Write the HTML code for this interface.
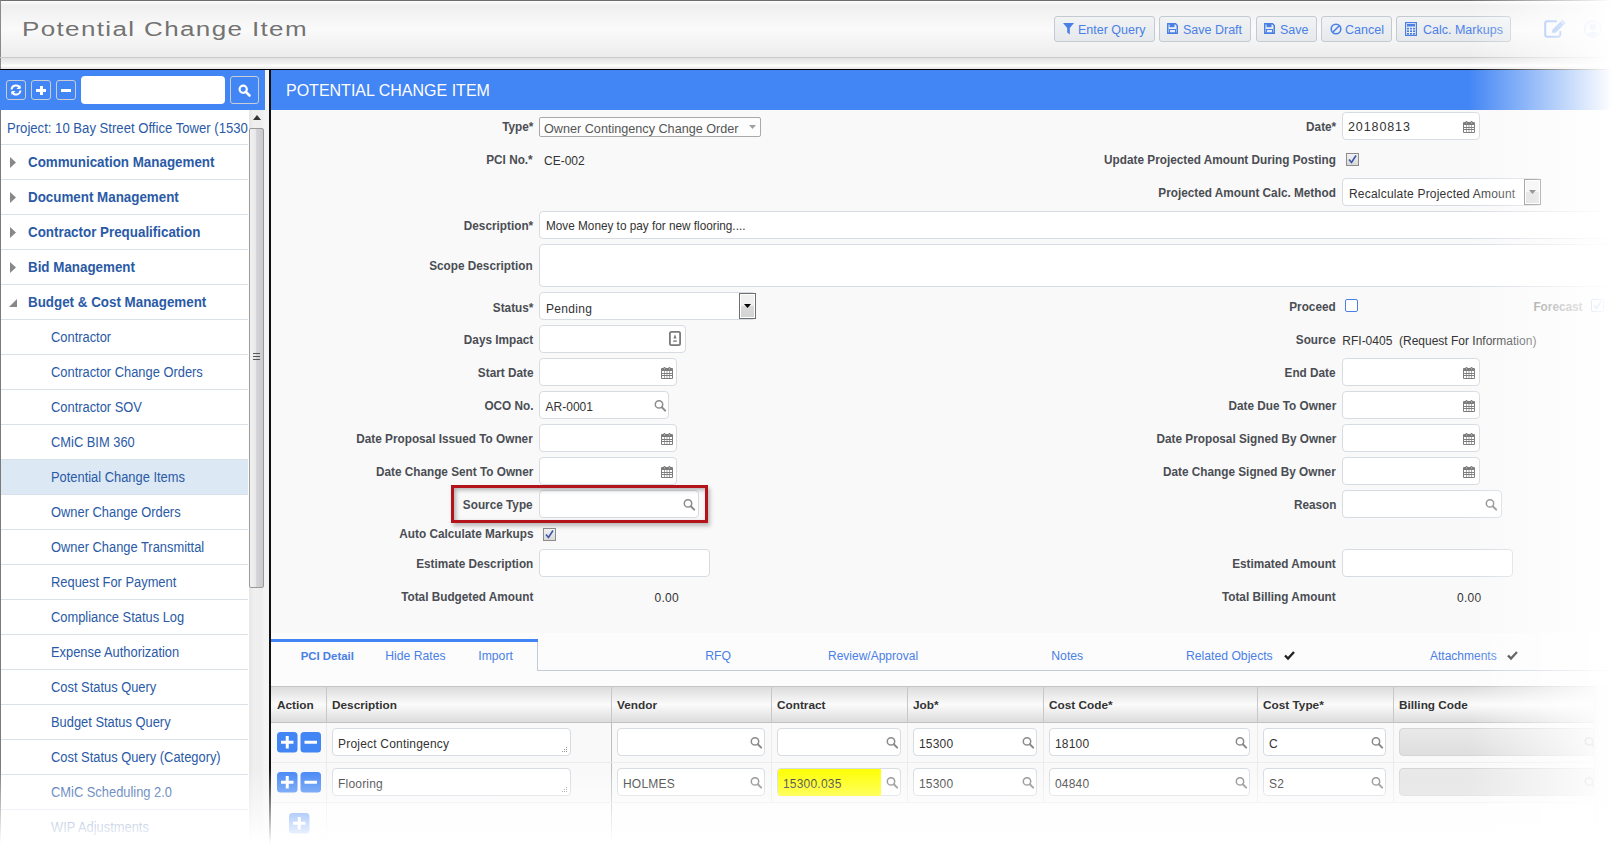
<!DOCTYPE html><html><head><meta charset="utf-8"><style>
*{margin:0;padding:0;box-sizing:border-box}
html,body{width:1612px;height:845px;overflow:hidden;background:#fff;font-family:"Liberation Sans", sans-serif}
.t{position:absolute;white-space:nowrap;line-height:1;font-family:"Liberation Sans", sans-serif}
.b{position:absolute}
.inp{position:absolute;background:#fff;border:1px solid #d6dce2;border-radius:4px}
svg{position:absolute;overflow:visible}
</style></head><body><div class="b" style="left:0px;top:0px;width:1612px;height:57px;background:linear-gradient(#fdfdfd,#efefef 8%,#fafafa 50%,#ececec);border-top:1px solid #6e6e6e;border-left:1px solid #8a8a8a"></div><div class="b" style="left:0px;top:57px;width:1612px;height:1px;background:#c9c9c9"></div><div class="b" style="left:0px;top:58px;width:1612px;height:11px;background:linear-gradient(#e2e2e2,#f4f4f4 55%,#fff 65%,#fff 75%,#ececec 85%,#ececec);border-left:1px solid #8a8a8a"></div><div class="b" style="left:0px;top:69px;width:1612px;height:1px;background:#000"></div><span class="t" style="left:22px;top:19px;font-size:20px;color:#737373;transform:scaleX(1.3);transform-origin:0 0;letter-spacing:1.05px">Potential Change Item</span><div class="b" style="left:1054px;top:16px;width:101px;height:26px;background:linear-gradient(#f1f3f5,#e6e9ec);border:1px solid #c3cad2;border-radius:3px"></div><svg style="left:1063px;top:23px" width="11" height="12" viewBox="0 0 11 12"><path d="M0 0H11L6.8 5V11.5L4.2 9.5V5Z" fill="#4a80e6"/></svg><span class="t" style="left:1078px;top:23.92px;font-size:12.5px;font-weight:normal;color:#4a80e6;">Enter Query</span><div class="b" style="left:1159px;top:16px;width:92px;height:26px;background:linear-gradient(#f1f3f5,#e6e9ec);border:1px solid #c3cad2;border-radius:3px"></div><svg style="left:1167px;top:23px" width="11" height="11" viewBox="0 0 11 11"><path d="M0.75 0.75H8.5L10.25 2.5V10.25H0.75Z" fill="none" stroke="#4a80e6" stroke-width="1.5"/><rect x="2.5" y="1" width="5" height="3.2" fill="#4a80e6"/><rect x="2.5" y="6.5" width="6" height="3.5" fill="none" stroke="#4a80e6" stroke-width="1"/></svg><span class="t" style="left:1183px;top:23.92px;font-size:12.5px;font-weight:normal;color:#4a80e6;">Save Draft</span><div class="b" style="left:1256px;top:16px;width:61px;height:26px;background:linear-gradient(#f1f3f5,#e6e9ec);border:1px solid #c3cad2;border-radius:3px"></div><svg style="left:1264px;top:23px" width="11" height="11" viewBox="0 0 11 11"><path d="M0.75 0.75H8.5L10.25 2.5V10.25H0.75Z" fill="none" stroke="#4a80e6" stroke-width="1.5"/><rect x="2.5" y="1" width="5" height="3.2" fill="#4a80e6"/><rect x="2.5" y="6.5" width="6" height="3.5" fill="none" stroke="#4a80e6" stroke-width="1"/></svg><span class="t" style="left:1280px;top:23.92px;font-size:12.5px;font-weight:normal;color:#4a80e6;">Save</span><div class="b" style="left:1321px;top:16px;width:71px;height:26px;background:linear-gradient(#f1f3f5,#e6e9ec);border:1px solid #c3cad2;border-radius:3px"></div><svg style="left:1330px;top:23px" width="12" height="12" viewBox="0 0 12 12"><circle cx="6" cy="6" r="4.8" fill="none" stroke="#4a80e6" stroke-width="1.6"/><path d="M2.8 9.2L9.2 2.8" stroke="#4a80e6" stroke-width="1.6"/></svg><span class="t" style="left:1345px;top:23.92px;font-size:12.5px;font-weight:normal;color:#4a80e6;">Cancel</span><div class="b" style="left:1396px;top:16px;width:115px;height:26px;background:linear-gradient(#f1f3f5,#e6e9ec);border:1px solid #c3cad2;border-radius:3px"></div><svg style="left:1405px;top:22px" width="12" height="14" viewBox="0 0 12 14"><rect x="0.6" y="0.6" width="10.8" height="12.8" fill="none" stroke="#4a80e6" stroke-width="1.2"/><rect x="2" y="2" width="8" height="2.5" fill="#4a80e6"/><g fill="#4a80e6"><rect x="2" y="5.8" width="2" height="1.6"/><rect x="5" y="5.8" width="2" height="1.6"/><rect x="8" y="5.8" width="2" height="1.6"/><rect x="2" y="8.4" width="2" height="1.6"/><rect x="5" y="8.4" width="2" height="1.6"/><rect x="8" y="8.4" width="2" height="1.6"/><rect x="2" y="11" width="2" height="1.6"/><rect x="5" y="11" width="2" height="1.6"/><rect x="8" y="11" width="2" height="1.6"/></g></svg><span class="t" style="left:1423px;top:23.92px;font-size:12.5px;font-weight:normal;color:#4a80e6;">Calc. Markups</span><svg style="left:1544px;top:20px" width="22" height="18" viewBox="0 0 22 18"><path d="M13 1.2H3.5A2.3 2.3 0 0 0 1.2 3.5V14.5A2.3 2.3 0 0 0 3.5 16.8H14A2.3 2.3 0 0 0 16.3 14.5V11" fill="none" stroke="#7aa6f2" stroke-width="2"/><path d="M7.8 12.8L8.6 9.6L16.6 1.6L19.8 4.8L11.8 12.8Z" fill="#7aa6f2"/><path d="M17.2 1L18.2 0L21.4 3.2L20.4 4.2Z" fill="#7aa6f2"/></svg><svg style="left:1584px;top:20px" width="18" height="18" viewBox="0 0 18 18"><circle cx="9" cy="9" r="8.2" fill="none" stroke="#b5cdf7" stroke-width="1.4"/><circle cx="9" cy="6.8" r="3.4" fill="#b5cdf7"/><path d="M3.2 14.2C3.8 10.8 14.2 10.8 14.8 14.2L9 17Z" fill="#b5cdf7"/></svg><div class="b" style="left:0px;top:70px;width:265px;height:775px;background:#fff;border-left:1px solid #7a7a7a"></div><div class="b" style="left:0px;top:70px;width:265px;height:40px;background:#4285f4"></div><div class="b" style="left:6px;top:80px;width:20px;height:20px;border:1px solid #c9ced6;border-radius:3px"></div><div class="b" style="left:31px;top:80px;width:20px;height:20px;border:1px solid #c9ced6;border-radius:3px"></div><div class="b" style="left:56px;top:80px;width:20px;height:20px;border:1px solid #c9ced6;border-radius:3px"></div><svg style="left:10px;top:84px" width="12" height="12" viewBox="0 0 12 12"><path d="M1.5 5.5A4.5 4.5 0 0 1 10 4" fill="none" stroke="#fff" stroke-width="2"/><path d="M10.5 1V5H6.5Z" fill="#fff"/><path d="M10.5 6.5A4.5 4.5 0 0 1 2 8" fill="none" stroke="#fff" stroke-width="2"/><path d="M1.5 11V7H5.5Z" fill="#fff"/></svg><div class="b" style="left:36px;top:89px;width:10px;height:3px;background:#fff"></div><div class="b" style="left:39.5px;top:86px;width:3.0px;height:9px;background:#fff"></div><div class="b" style="left:61px;top:89px;width:10px;height:3px;background:#fff"></div><div class="b" style="left:81px;top:76px;width:144px;height:28px;background:#fff;border-radius:4px"></div><div class="b" style="left:230px;top:76px;width:29px;height:28px;border:1px solid #c9ced6;border-radius:3px"></div><svg style="left:238px;top:84px" width="13" height="13" viewBox="0 0 13 13"><circle cx="5.2" cy="5.2" r="3.6" fill="none" stroke="#fff" stroke-width="2.2"/><path d="M7.8 7.8L11.5 11.5" stroke="#fff" stroke-width="2.6" stroke-linecap="round"/></svg><div class="b" style="left:1px;top:110px;width:247px;height:35px;overflow:hidden"><span class="t" style="left:6px;top:10.95px;font-size:14px;font-weight:normal;color:#2a5aa6;transform:scaleX(0.937);transform-origin:0 0;">Project: 10 Bay Street Office Tower (15300)</span></div><div class="b" style="left:1px;top:144px;width:247px;height:1px;background:#d8e0e8"></div><svg style="left:10px;top:157px" width="7" height="11" viewBox="0 0 7 11"><path d="M0 0L6 5.5L0 11Z" fill="#888"/></svg><span class="t" style="left:28px;top:155.25px;font-size:14px;font-weight:bold;color:#2a5aa6;transform:scaleX(0.955);transform-origin:0 0;">Communication Management</span><div class="b" style="left:1px;top:179px;width:247px;height:1px;background:#d8e0e8"></div><svg style="left:10px;top:192px" width="7" height="11" viewBox="0 0 7 11"><path d="M0 0L6 5.5L0 11Z" fill="#888"/></svg><span class="t" style="left:28px;top:190.25px;font-size:14px;font-weight:bold;color:#2a5aa6;transform:scaleX(0.955);transform-origin:0 0;">Document Management</span><div class="b" style="left:1px;top:214px;width:247px;height:1px;background:#d8e0e8"></div><svg style="left:10px;top:227px" width="7" height="11" viewBox="0 0 7 11"><path d="M0 0L6 5.5L0 11Z" fill="#888"/></svg><span class="t" style="left:28px;top:225.25px;font-size:14px;font-weight:bold;color:#2a5aa6;transform:scaleX(0.955);transform-origin:0 0;">Contractor Prequalification</span><div class="b" style="left:1px;top:249px;width:247px;height:1px;background:#d8e0e8"></div><svg style="left:10px;top:262px" width="7" height="11" viewBox="0 0 7 11"><path d="M0 0L6 5.5L0 11Z" fill="#888"/></svg><span class="t" style="left:28px;top:260.25px;font-size:14px;font-weight:bold;color:#2a5aa6;transform:scaleX(0.955);transform-origin:0 0;">Bid Management</span><div class="b" style="left:1px;top:284px;width:247px;height:1px;background:#d8e0e8"></div><svg style="left:9px;top:299px" width="9" height="9" viewBox="0 0 9 9"><path d="M8 0V8H0Z" fill="#888"/></svg><span class="t" style="left:28px;top:295.25px;font-size:14px;font-weight:bold;color:#2a5aa6;transform:scaleX(0.955);transform-origin:0 0;">Budget &amp; Cost Management</span><div class="b" style="left:1px;top:319px;width:247px;height:1px;background:#d8e0e8"></div><span class="t" style="left:51px;top:330.25px;font-size:14px;font-weight:normal;color:#2a5aa6;transform:scaleX(0.92);transform-origin:0 0;">Contractor</span><div class="b" style="left:1px;top:354px;width:247px;height:1px;background:#d8e0e8"></div><span class="t" style="left:51px;top:365.25px;font-size:14px;font-weight:normal;color:#2a5aa6;transform:scaleX(0.92);transform-origin:0 0;">Contractor Change Orders</span><div class="b" style="left:1px;top:389px;width:247px;height:1px;background:#d8e0e8"></div><span class="t" style="left:51px;top:400.25px;font-size:14px;font-weight:normal;color:#2a5aa6;transform:scaleX(0.92);transform-origin:0 0;">Contractor SOV</span><div class="b" style="left:1px;top:424px;width:247px;height:1px;background:#d8e0e8"></div><span class="t" style="left:51px;top:435.25px;font-size:14px;font-weight:normal;color:#2a5aa6;transform:scaleX(0.92);transform-origin:0 0;">CMiC BIM 360</span><div class="b" style="left:1px;top:459px;width:247px;height:35px;background:#dce8f4"></div><div class="b" style="left:1px;top:459px;width:247px;height:1px;background:#d8e0e8"></div><span class="t" style="left:51px;top:470.25px;font-size:14px;font-weight:normal;color:#2a5aa6;transform:scaleX(0.92);transform-origin:0 0;">Potential Change Items</span><div class="b" style="left:1px;top:494px;width:247px;height:1px;background:#d8e0e8"></div><span class="t" style="left:51px;top:505.25px;font-size:14px;font-weight:normal;color:#2a5aa6;transform:scaleX(0.92);transform-origin:0 0;">Owner Change Orders</span><div class="b" style="left:1px;top:529px;width:247px;height:1px;background:#d8e0e8"></div><span class="t" style="left:51px;top:540.25px;font-size:14px;font-weight:normal;color:#2a5aa6;transform:scaleX(0.92);transform-origin:0 0;">Owner Change Transmittal</span><div class="b" style="left:1px;top:564px;width:247px;height:1px;background:#d8e0e8"></div><span class="t" style="left:51px;top:575.25px;font-size:14px;font-weight:normal;color:#2a5aa6;transform:scaleX(0.92);transform-origin:0 0;">Request For Payment</span><div class="b" style="left:1px;top:599px;width:247px;height:1px;background:#d8e0e8"></div><span class="t" style="left:51px;top:610.25px;font-size:14px;font-weight:normal;color:#2a5aa6;transform:scaleX(0.92);transform-origin:0 0;">Compliance Status Log</span><div class="b" style="left:1px;top:634px;width:247px;height:1px;background:#d8e0e8"></div><span class="t" style="left:51px;top:645.25px;font-size:14px;font-weight:normal;color:#2a5aa6;transform:scaleX(0.92);transform-origin:0 0;">Expense Authorization</span><div class="b" style="left:1px;top:669px;width:247px;height:1px;background:#d8e0e8"></div><span class="t" style="left:51px;top:680.25px;font-size:14px;font-weight:normal;color:#2a5aa6;transform:scaleX(0.92);transform-origin:0 0;">Cost Status Query</span><div class="b" style="left:1px;top:704px;width:247px;height:1px;background:#d8e0e8"></div><span class="t" style="left:51px;top:715.25px;font-size:14px;font-weight:normal;color:#2a5aa6;transform:scaleX(0.92);transform-origin:0 0;">Budget Status Query</span><div class="b" style="left:1px;top:739px;width:247px;height:1px;background:#d8e0e8"></div><span class="t" style="left:51px;top:750.25px;font-size:14px;font-weight:normal;color:#2a5aa6;transform:scaleX(0.92);transform-origin:0 0;">Cost Status Query (Category)</span><div class="b" style="left:1px;top:774px;width:247px;height:1px;background:#d8e0e8"></div><span class="t" style="left:51px;top:785.25px;font-size:14px;font-weight:normal;color:#2a5aa6;transform:scaleX(0.92);transform-origin:0 0;">CMiC Scheduling 2.0</span><div class="b" style="left:1px;top:809px;width:247px;height:1px;background:#d8e0e8"></div><span class="t" style="left:51px;top:820.25px;font-size:14px;font-weight:normal;color:#2a5aa6;transform:scaleX(0.92);transform-origin:0 0;">WIP Adjustments</span><div class="b" style="left:249px;top:110px;width:16px;height:735px;background:linear-gradient(90deg,#e6e6e6,#efefef 30%,#eeeeee 80%,#f6f6f6)"></div><svg style="left:253px;top:115px" width="8" height="5" viewBox="0 0 8 5"><path d="M0 5L4 0L8 5Z" fill="#333"/></svg><div class="b" style="left:249px;top:128px;width:15px;height:460px;background:linear-gradient(90deg,#f2f2f2,#e8e8e8 45%,#d6d6d8 50%,#c8c8cc);border:1px solid #9a9a9a;border-radius:2px"></div><div class="b" style="left:253px;top:353px;width:7px;height:1px;background:#555"></div><div class="b" style="left:253px;top:356px;width:7px;height:1px;background:#555"></div><div class="b" style="left:253px;top:359px;width:7px;height:1px;background:#555"></div><div class="b" style="left:265px;top:70px;width:4px;height:775px;background:#f4f4f4"></div><div class="b" style="left:269px;top:70px;width:2px;height:775px;background:#111"></div><div class="b" style="left:271px;top:70px;width:1341px;height:775px;background:#f9f9f9"></div><div class="b" style="left:271px;top:70px;width:1341px;height:40px;background:#4285f4"></div><span class="t" style="left:286px;top:83.26px;font-size:16px;font-weight:normal;color:#fff;">POTENTIAL CHANGE ITEM</span><span class="t" style="right:1079px;top:121.13px;font-size:12.6px;font-weight:bold;color:#4a4d53;transform:scaleX(0.935);transform-origin:100% 0;">Type*</span><div class="b" style="left:539px;top:117px;width:222px;height:20px;background:#fdfdfd;border:1px solid #a9a9a9;border-radius:2px"></div><span class="t" style="left:544px;top:121.50px;font-size:13px;font-weight:normal;color:#555;transform:scaleX(0.972);transform-origin:0 0;">Owner Contingency Change Order</span><svg style="left:748.5px;top:125px" width="7" height="4" viewBox="0 0 7 4"><path d="M0 0H7L3.5 4Z" fill="#a0a0a0"/></svg><span class="t" style="right:1079px;top:154.13px;font-size:12.6px;font-weight:bold;color:#4a4d53;transform:scaleX(0.935);transform-origin:100% 0;">PCI No.*</span><span class="t" style="left:544px;top:155.14px;font-size:12px;font-weight:normal;color:#333;">CE-002</span><span class="t" style="right:1079px;top:219.63px;font-size:12.6px;font-weight:bold;color:#4a4d53;transform:scaleX(0.935);transform-origin:100% 0;">Description*</span><div class="inp" style="left:539px;top:211px;width:1083px;height:28px;"></div><span class="t" style="left:545.5px;top:219.20px;font-size:13px;font-weight:normal;color:#333;transform:scaleX(0.905);transform-origin:0 0;">Move Money to pay for new flooring....</span><span class="t" style="right:1079px;top:260.13px;font-size:12.6px;font-weight:bold;color:#4a4d53;transform:scaleX(0.935);transform-origin:100% 0;">Scope Description</span><div class="inp" style="left:539px;top:244px;width:1083px;height:43px;"></div><span class="t" style="right:1079px;top:301.63px;font-size:12.6px;font-weight:bold;color:#4a4d53;transform:scaleX(0.935);transform-origin:100% 0;">Status*</span><div class="inp" style="left:539px;top:292px;width:217px;height:28px;"></div><div class="b" style="left:739px;top:293px;width:17px;height:26px;background:linear-gradient(#f0f0f0 50%,#d9d9d9 50%,#d3d3d3);border:1px solid #6f6f6f;box-shadow:inset 0 0 0 1px #fff"></div><svg style="left:744.0px;top:303.5px" width="7" height="4" viewBox="0 0 7 4"><path d="M0 0H7L3.5 4Z" fill="#000"/></svg><span class="t" style="left:546px;top:302.64px;font-size:12px;font-weight:normal;color:#333;letter-spacing:0.3px">Pending</span><span class="t" style="right:1079px;top:334.33px;font-size:12.6px;font-weight:bold;color:#4a4d53;transform:scaleX(0.935);transform-origin:100% 0;">Days Impact</span><div class="inp" style="left:539px;top:325px;width:147px;height:28px;"></div><svg style="left:669px;top:331px" width="12" height="15" viewBox="0 0 12 15"><rect x="0.9" y="0.9" width="10.2" height="13.2" rx="1.6" fill="#fff" stroke="#7a7a7a" stroke-width="1.8"/><path d="M6 3.2L7.6 7.4H4.4Z" fill="#7a7a7a"/><rect x="4.2" y="9.2" width="3.6" height="1.8" fill="#9a9a9a"/></svg><span class="t" style="right:1079px;top:367.13px;font-size:12.6px;font-weight:bold;color:#4a4d53;transform:scaleX(0.935);transform-origin:100% 0;">Start Date</span><div class="inp" style="left:539px;top:358px;width:138px;height:28px;"></div><svg style="left:661px;top:367px" width="12" height="12" viewBox="0 0 12 12"><rect x="0" y="1" width="12" height="11" rx="1" fill="#7c7c7c"/><rect x="1.00" y="4" width="2" height="2" fill="#fff"/><rect x="1.00" y="7" width="2" height="1" fill="#fff"/><rect x="1.00" y="9" width="2" height="2" fill="#fff"/><rect x="3.67" y="4" width="2" height="2" fill="#fff"/><rect x="3.67" y="7" width="2" height="1" fill="#fff"/><rect x="3.67" y="9" width="2" height="2" fill="#fff"/><rect x="6.33" y="4" width="2" height="2" fill="#fff"/><rect x="6.33" y="7" width="2" height="1" fill="#fff"/><rect x="6.33" y="9" width="2" height="2" fill="#fff"/><rect x="9.00" y="4" width="2" height="2" fill="#fff"/><rect x="9.00" y="7" width="2" height="1" fill="#fff"/><rect x="9.00" y="9" width="2" height="2" fill="#fff"/><rect x="2.5" y="0" width="2" height="2" rx="0.8" fill="#7c7c7c"/><rect x="7.5" y="0" width="2" height="2" rx="0.8" fill="#7c7c7c"/><rect x="3.2" y="1" width="0.8" height="1.5" fill="#bbb"/><rect x="8.2" y="1" width="0.8" height="1.5" fill="#bbb"/></svg><span class="t" style="right:1079px;top:399.93px;font-size:12.6px;font-weight:bold;color:#4a4d53;transform:scaleX(0.935);transform-origin:100% 0;">OCO No.</span><div class="inp" style="left:539px;top:391px;width:130px;height:28px;"></div><svg style="left:655px;top:400px" width="12" height="11" viewBox="0 0 12 11"><circle cx="4" cy="4.4" r="3.7" fill="none" stroke="#8a8a8a" stroke-width="1.5"/><path d="M6.8 7.2L10.2 10.6" stroke="#8a8a8a" stroke-width="2" stroke-linecap="round"/></svg><span class="t" style="left:545.6px;top:401.24px;font-size:12px;font-weight:normal;color:#333;">AR-0001</span><span class="t" style="right:1079px;top:433.13px;font-size:12.6px;font-weight:bold;color:#4a4d53;transform:scaleX(0.935);transform-origin:100% 0;">Date Proposal Issued To Owner</span><div class="inp" style="left:539px;top:424px;width:138px;height:28px;"></div><svg style="left:661px;top:433px" width="12" height="12" viewBox="0 0 12 12"><rect x="0" y="1" width="12" height="11" rx="1" fill="#7c7c7c"/><rect x="1.00" y="4" width="2" height="2" fill="#fff"/><rect x="1.00" y="7" width="2" height="1" fill="#fff"/><rect x="1.00" y="9" width="2" height="2" fill="#fff"/><rect x="3.67" y="4" width="2" height="2" fill="#fff"/><rect x="3.67" y="7" width="2" height="1" fill="#fff"/><rect x="3.67" y="9" width="2" height="2" fill="#fff"/><rect x="6.33" y="4" width="2" height="2" fill="#fff"/><rect x="6.33" y="7" width="2" height="1" fill="#fff"/><rect x="6.33" y="9" width="2" height="2" fill="#fff"/><rect x="9.00" y="4" width="2" height="2" fill="#fff"/><rect x="9.00" y="7" width="2" height="1" fill="#fff"/><rect x="9.00" y="9" width="2" height="2" fill="#fff"/><rect x="2.5" y="0" width="2" height="2" rx="0.8" fill="#7c7c7c"/><rect x="7.5" y="0" width="2" height="2" rx="0.8" fill="#7c7c7c"/><rect x="3.2" y="1" width="0.8" height="1.5" fill="#bbb"/><rect x="8.2" y="1" width="0.8" height="1.5" fill="#bbb"/></svg><span class="t" style="right:1079px;top:466.13px;font-size:12.6px;font-weight:bold;color:#4a4d53;transform:scaleX(0.935);transform-origin:100% 0;">Date Change Sent To Owner</span><div class="inp" style="left:539px;top:457px;width:138px;height:28px;"></div><svg style="left:661px;top:466px" width="12" height="12" viewBox="0 0 12 12"><rect x="0" y="1" width="12" height="11" rx="1" fill="#7c7c7c"/><rect x="1.00" y="4" width="2" height="2" fill="#fff"/><rect x="1.00" y="7" width="2" height="1" fill="#fff"/><rect x="1.00" y="9" width="2" height="2" fill="#fff"/><rect x="3.67" y="4" width="2" height="2" fill="#fff"/><rect x="3.67" y="7" width="2" height="1" fill="#fff"/><rect x="3.67" y="9" width="2" height="2" fill="#fff"/><rect x="6.33" y="4" width="2" height="2" fill="#fff"/><rect x="6.33" y="7" width="2" height="1" fill="#fff"/><rect x="6.33" y="9" width="2" height="2" fill="#fff"/><rect x="9.00" y="4" width="2" height="2" fill="#fff"/><rect x="9.00" y="7" width="2" height="1" fill="#fff"/><rect x="9.00" y="9" width="2" height="2" fill="#fff"/><rect x="2.5" y="0" width="2" height="2" rx="0.8" fill="#7c7c7c"/><rect x="7.5" y="0" width="2" height="2" rx="0.8" fill="#7c7c7c"/><rect x="3.2" y="1" width="0.8" height="1.5" fill="#bbb"/><rect x="8.2" y="1" width="0.8" height="1.5" fill="#bbb"/></svg><span class="t" style="right:1079px;top:498.83px;font-size:12.6px;font-weight:bold;color:#4a4d53;transform:scaleX(0.935);transform-origin:100% 0;">Source Type</span><div class="inp" style="left:539px;top:490px;width:160px;height:28px;"></div><svg style="left:684px;top:499px" width="12" height="11" viewBox="0 0 12 11"><circle cx="4" cy="4.4" r="3.7" fill="none" stroke="#8a8a8a" stroke-width="1.5"/><path d="M6.8 7.2L10.2 10.6" stroke="#8a8a8a" stroke-width="2" stroke-linecap="round"/></svg><div class="b" style="left:451px;top:485px;width:257px;height:38px;border:3px solid #b3141c;box-shadow:2px 3px 4px rgba(0,0,0,0.25), inset 2px 2px 4px rgba(0,0,0,0.3)"></div><span class="t" style="right:1079px;top:528.33px;font-size:12.6px;font-weight:bold;color:#4a4d53;transform:scaleX(0.935);transform-origin:100% 0;">Auto Calculate Markups</span><div class="b" style="left:543px;top:528px;width:13px;height:13px;background:linear-gradient(#f2f2f2,#d9d9d9);border:1px solid #8c8c8c"></div><svg style="left:545px;top:530px" width="9" height="9" viewBox="0 0 9 9"><path d="M1 4.5L3.5 7.5L8 0.5" fill="none" stroke="#3b57a8" stroke-width="1.6"/></svg><span class="t" style="right:1079px;top:557.83px;font-size:12.6px;font-weight:bold;color:#4a4d53;transform:scaleX(0.935);transform-origin:100% 0;">Estimate Description</span><div class="inp" style="left:539px;top:549px;width:171px;height:28px;"></div><span class="t" style="right:1079px;top:590.83px;font-size:12.6px;font-weight:bold;color:#4a4d53;transform:scaleX(0.935);transform-origin:100% 0;">Total Budgeted Amount</span><span class="t" style="left:654.5px;top:592.24px;font-size:12px;font-weight:normal;color:#333;letter-spacing:0.3px">0.00</span><span class="t" style="right:276px;top:121.13px;font-size:12.6px;font-weight:bold;color:#4a4d53;transform:scaleX(0.935);transform-origin:100% 0;">Date*</span><div class="inp" style="left:1342px;top:112px;width:138px;height:28px;"></div><svg style="left:1463px;top:121px" width="12" height="12" viewBox="0 0 12 12"><rect x="0" y="1" width="12" height="11" rx="1" fill="#7c7c7c"/><rect x="1.00" y="4" width="2" height="2" fill="#fff"/><rect x="1.00" y="7" width="2" height="1" fill="#fff"/><rect x="1.00" y="9" width="2" height="2" fill="#fff"/><rect x="3.67" y="4" width="2" height="2" fill="#fff"/><rect x="3.67" y="7" width="2" height="1" fill="#fff"/><rect x="3.67" y="9" width="2" height="2" fill="#fff"/><rect x="6.33" y="4" width="2" height="2" fill="#fff"/><rect x="6.33" y="7" width="2" height="1" fill="#fff"/><rect x="6.33" y="9" width="2" height="2" fill="#fff"/><rect x="9.00" y="4" width="2" height="2" fill="#fff"/><rect x="9.00" y="7" width="2" height="1" fill="#fff"/><rect x="9.00" y="9" width="2" height="2" fill="#fff"/><rect x="2.5" y="0" width="2" height="2" rx="0.8" fill="#7c7c7c"/><rect x="7.5" y="0" width="2" height="2" rx="0.8" fill="#7c7c7c"/><rect x="3.2" y="1" width="0.8" height="1.5" fill="#bbb"/><rect x="8.2" y="1" width="0.8" height="1.5" fill="#bbb"/></svg><span class="t" style="left:1348px;top:121.32px;font-size:12.5px;font-weight:normal;color:#333;letter-spacing:0.9px">20180813</span><span class="t" style="right:276px;top:154.13px;font-size:12.6px;font-weight:bold;color:#4a4d53;transform:scaleX(0.935);transform-origin:100% 0;">Update Projected Amount During Posting</span><div class="b" style="left:1346px;top:153px;width:13px;height:13px;background:linear-gradient(#f2f2f2,#d9d9d9);border:1px solid #8c8c8c"></div><svg style="left:1348px;top:155px" width="9" height="9" viewBox="0 0 9 9"><path d="M1 4.5L3.5 7.5L8 0.5" fill="none" stroke="#3b57a8" stroke-width="1.6"/></svg><span class="t" style="right:276px;top:187.13px;font-size:12.6px;font-weight:bold;color:#4a4d53;transform:scaleX(0.935);transform-origin:100% 0;">Projected Amount Calc. Method</span><div class="inp" style="left:1342px;top:178px;width:199px;height:28px;"></div><div class="b" style="left:1524px;top:179px;width:17px;height:26px;background:linear-gradient(#f0f0f0 50%,#d9d9d9 50%,#d3d3d3);border:1px solid #6f6f6f;box-shadow:inset 0 0 0 1px #fff"></div><svg style="left:1529.0px;top:189.5px" width="7" height="4" viewBox="0 0 7 4"><path d="M0 0H7L3.5 4Z" fill="#444"/></svg><span class="t" style="left:1349px;top:188.24px;font-size:12px;font-weight:normal;color:#333;letter-spacing:0.2px">Recalculate Projected Amount</span><span class="t" style="right:276px;top:301.13px;font-size:12.6px;font-weight:bold;color:#4a4d53;transform:scaleX(0.935);transform-origin:100% 0;">Proceed</span><div class="b" style="left:1345px;top:299px;width:13px;height:13px;background:#fff;border:1.5px solid #4b7fe6;border-radius:2px"></div><span class="t" style="right:30px;top:301.13px;font-size:12.6px;font-weight:bold;color:#777;transform:scaleX(0.935);transform-origin:100% 0;">Forecast</span><div class="b" style="left:1591px;top:299px;width:13px;height:13px;background:#fff;border:1.5px solid #4b7fe6;border-radius:2px"></div><svg style="left:1593px;top:301px" width="9" height="9" viewBox="0 0 9 9"><path d="M1 4.5L3.5 7.5L8 0.5" fill="none" stroke="#4b7fe6" stroke-width="1.6"/></svg><span class="t" style="right:276px;top:334.13px;font-size:12.6px;font-weight:bold;color:#4a4d53;transform:scaleX(0.935);transform-origin:100% 0;">Source</span><span class="t" style="left:1342.3px;top:334.64px;font-size:12px;font-weight:normal;color:#333;">RFI-0405&nbsp;&nbsp;(Request For Information)</span><span class="t" style="right:276px;top:367.13px;font-size:12.6px;font-weight:bold;color:#4a4d53;transform:scaleX(0.935);transform-origin:100% 0;">End Date</span><div class="inp" style="left:1342px;top:358px;width:138px;height:28px;"></div><svg style="left:1463px;top:367px" width="12" height="12" viewBox="0 0 12 12"><rect x="0" y="1" width="12" height="11" rx="1" fill="#7c7c7c"/><rect x="1.00" y="4" width="2" height="2" fill="#fff"/><rect x="1.00" y="7" width="2" height="1" fill="#fff"/><rect x="1.00" y="9" width="2" height="2" fill="#fff"/><rect x="3.67" y="4" width="2" height="2" fill="#fff"/><rect x="3.67" y="7" width="2" height="1" fill="#fff"/><rect x="3.67" y="9" width="2" height="2" fill="#fff"/><rect x="6.33" y="4" width="2" height="2" fill="#fff"/><rect x="6.33" y="7" width="2" height="1" fill="#fff"/><rect x="6.33" y="9" width="2" height="2" fill="#fff"/><rect x="9.00" y="4" width="2" height="2" fill="#fff"/><rect x="9.00" y="7" width="2" height="1" fill="#fff"/><rect x="9.00" y="9" width="2" height="2" fill="#fff"/><rect x="2.5" y="0" width="2" height="2" rx="0.8" fill="#7c7c7c"/><rect x="7.5" y="0" width="2" height="2" rx="0.8" fill="#7c7c7c"/><rect x="3.2" y="1" width="0.8" height="1.5" fill="#bbb"/><rect x="8.2" y="1" width="0.8" height="1.5" fill="#bbb"/></svg><span class="t" style="right:276px;top:400.13px;font-size:12.6px;font-weight:bold;color:#4a4d53;transform:scaleX(0.935);transform-origin:100% 0;">Date Due To Owner</span><div class="inp" style="left:1342px;top:391px;width:138px;height:28px;"></div><svg style="left:1463px;top:400px" width="12" height="12" viewBox="0 0 12 12"><rect x="0" y="1" width="12" height="11" rx="1" fill="#7c7c7c"/><rect x="1.00" y="4" width="2" height="2" fill="#fff"/><rect x="1.00" y="7" width="2" height="1" fill="#fff"/><rect x="1.00" y="9" width="2" height="2" fill="#fff"/><rect x="3.67" y="4" width="2" height="2" fill="#fff"/><rect x="3.67" y="7" width="2" height="1" fill="#fff"/><rect x="3.67" y="9" width="2" height="2" fill="#fff"/><rect x="6.33" y="4" width="2" height="2" fill="#fff"/><rect x="6.33" y="7" width="2" height="1" fill="#fff"/><rect x="6.33" y="9" width="2" height="2" fill="#fff"/><rect x="9.00" y="4" width="2" height="2" fill="#fff"/><rect x="9.00" y="7" width="2" height="1" fill="#fff"/><rect x="9.00" y="9" width="2" height="2" fill="#fff"/><rect x="2.5" y="0" width="2" height="2" rx="0.8" fill="#7c7c7c"/><rect x="7.5" y="0" width="2" height="2" rx="0.8" fill="#7c7c7c"/><rect x="3.2" y="1" width="0.8" height="1.5" fill="#bbb"/><rect x="8.2" y="1" width="0.8" height="1.5" fill="#bbb"/></svg><span class="t" style="right:276px;top:433.13px;font-size:12.6px;font-weight:bold;color:#4a4d53;transform:scaleX(0.935);transform-origin:100% 0;">Date Proposal Signed By Owner</span><div class="inp" style="left:1342px;top:424px;width:138px;height:28px;"></div><svg style="left:1463px;top:433px" width="12" height="12" viewBox="0 0 12 12"><rect x="0" y="1" width="12" height="11" rx="1" fill="#7c7c7c"/><rect x="1.00" y="4" width="2" height="2" fill="#fff"/><rect x="1.00" y="7" width="2" height="1" fill="#fff"/><rect x="1.00" y="9" width="2" height="2" fill="#fff"/><rect x="3.67" y="4" width="2" height="2" fill="#fff"/><rect x="3.67" y="7" width="2" height="1" fill="#fff"/><rect x="3.67" y="9" width="2" height="2" fill="#fff"/><rect x="6.33" y="4" width="2" height="2" fill="#fff"/><rect x="6.33" y="7" width="2" height="1" fill="#fff"/><rect x="6.33" y="9" width="2" height="2" fill="#fff"/><rect x="9.00" y="4" width="2" height="2" fill="#fff"/><rect x="9.00" y="7" width="2" height="1" fill="#fff"/><rect x="9.00" y="9" width="2" height="2" fill="#fff"/><rect x="2.5" y="0" width="2" height="2" rx="0.8" fill="#7c7c7c"/><rect x="7.5" y="0" width="2" height="2" rx="0.8" fill="#7c7c7c"/><rect x="3.2" y="1" width="0.8" height="1.5" fill="#bbb"/><rect x="8.2" y="1" width="0.8" height="1.5" fill="#bbb"/></svg><span class="t" style="right:276px;top:466.13px;font-size:12.6px;font-weight:bold;color:#4a4d53;transform:scaleX(0.935);transform-origin:100% 0;">Date Change Signed By Owner</span><div class="inp" style="left:1342px;top:457px;width:138px;height:28px;"></div><svg style="left:1463px;top:466px" width="12" height="12" viewBox="0 0 12 12"><rect x="0" y="1" width="12" height="11" rx="1" fill="#7c7c7c"/><rect x="1.00" y="4" width="2" height="2" fill="#fff"/><rect x="1.00" y="7" width="2" height="1" fill="#fff"/><rect x="1.00" y="9" width="2" height="2" fill="#fff"/><rect x="3.67" y="4" width="2" height="2" fill="#fff"/><rect x="3.67" y="7" width="2" height="1" fill="#fff"/><rect x="3.67" y="9" width="2" height="2" fill="#fff"/><rect x="6.33" y="4" width="2" height="2" fill="#fff"/><rect x="6.33" y="7" width="2" height="1" fill="#fff"/><rect x="6.33" y="9" width="2" height="2" fill="#fff"/><rect x="9.00" y="4" width="2" height="2" fill="#fff"/><rect x="9.00" y="7" width="2" height="1" fill="#fff"/><rect x="9.00" y="9" width="2" height="2" fill="#fff"/><rect x="2.5" y="0" width="2" height="2" rx="0.8" fill="#7c7c7c"/><rect x="7.5" y="0" width="2" height="2" rx="0.8" fill="#7c7c7c"/><rect x="3.2" y="1" width="0.8" height="1.5" fill="#bbb"/><rect x="8.2" y="1" width="0.8" height="1.5" fill="#bbb"/></svg><span class="t" style="right:276px;top:499.13px;font-size:12.6px;font-weight:bold;color:#4a4d53;transform:scaleX(0.935);transform-origin:100% 0;">Reason</span><div class="inp" style="left:1342px;top:490px;width:160px;height:28px;"></div><svg style="left:1486px;top:499px" width="12" height="11" viewBox="0 0 12 11"><circle cx="4" cy="4.4" r="3.7" fill="none" stroke="#8a8a8a" stroke-width="1.5"/><path d="M6.8 7.2L10.2 10.6" stroke="#8a8a8a" stroke-width="2" stroke-linecap="round"/></svg><span class="t" style="right:276px;top:558.13px;font-size:12.6px;font-weight:bold;color:#4a4d53;transform:scaleX(0.935);transform-origin:100% 0;">Estimated Amount</span><div class="inp" style="left:1342px;top:549px;width:171px;height:28px;"></div><span class="t" style="right:276px;top:591.13px;font-size:12.6px;font-weight:bold;color:#4a4d53;transform:scaleX(0.935);transform-origin:100% 0;">Total Billing Amount</span><span class="t" style="left:1457px;top:592.24px;font-size:12px;font-weight:normal;color:#333;letter-spacing:0.3px">0.00</span><div class="b" style="left:271px;top:633px;width:1341px;height:212px;background:#fcfcfc"></div><div class="b" style="left:271px;top:639px;width:267px;height:3px;background:#4285f4"></div><div class="b" style="left:537px;top:642px;width:1px;height:29px;background:#c3ccd6"></div><div class="b" style="left:538px;top:670px;width:1074px;height:1px;background:#c3ccd6"></div><span class="t" style="left:300.7px;top:650.55px;font-size:11.4px;font-weight:bold;color:#4a7fe6;">PCI Detail</span><span class="t" style="left:385.3px;top:649.87px;font-size:12.2px;font-weight:normal;color:#4a7fe6;">Hide Rates</span><span class="t" style="left:478.3px;top:649.87px;font-size:12.2px;font-weight:normal;color:#4a7fe6;">Import</span><span class="t" style="left:705.3px;top:649.67px;font-size:12.2px;font-weight:normal;color:#4a7fe6;">RFQ</span><span class="t" style="left:828px;top:649.84px;font-size:12px;font-weight:normal;color:#4a7fe6;">Review/Approval</span><span class="t" style="left:1051.3px;top:649.67px;font-size:12.2px;font-weight:normal;color:#4a7fe6;">Notes</span><span class="t" style="left:1186px;top:649.67px;font-size:12.2px;font-weight:normal;color:#4a7fe6;">Related Objects</span><span class="t" style="left:1430px;top:649.84px;font-size:12px;font-weight:normal;color:#4a7fe6;">Attachments</span><svg style="left:1284px;top:651px" width="11" height="9" viewBox="0 0 11 9"><path d="M1 4.5L4 7.5L10 1" fill="none" stroke="#222" stroke-width="2.4"/></svg><svg style="left:1507px;top:651px" width="11" height="9" viewBox="0 0 11 9"><path d="M1 4.5L4 7.5L10 1" fill="none" stroke="#222" stroke-width="2.4"/></svg><div class="b" style="left:271px;top:723px;width:1323px;height:79px;background:#f9f9f9"></div><div class="b" style="left:271px;top:686px;width:1323px;height:37px;background:linear-gradient(#dcdcdc,#fbfbfb 50%,#dcdcdc);border-top:1.5px solid #c4c4c4;border-bottom:1px solid #c2c2c2"></div><div class="b" style="left:326px;top:686px;width:1px;height:36px;background:#c8c8c8"></div><div class="b" style="left:326px;top:723px;width:1px;height:122px;background:#ebebeb"></div><div class="b" style="left:611px;top:686px;width:1px;height:36px;background:#c8c8c8"></div><div class="b" style="left:611px;top:723px;width:1px;height:122px;background:#bdbdbd"></div><div class="b" style="left:771px;top:686px;width:1px;height:36px;background:#c8c8c8"></div><div class="b" style="left:771px;top:723px;width:1px;height:79px;background:#ebebeb"></div><div class="b" style="left:907px;top:686px;width:1px;height:36px;background:#c8c8c8"></div><div class="b" style="left:907px;top:723px;width:1px;height:79px;background:#ebebeb"></div><div class="b" style="left:1043px;top:686px;width:1px;height:36px;background:#c8c8c8"></div><div class="b" style="left:1043px;top:723px;width:1px;height:79px;background:#ebebeb"></div><div class="b" style="left:1257px;top:686px;width:1px;height:36px;background:#c8c8c8"></div><div class="b" style="left:1257px;top:723px;width:1px;height:79px;background:#ebebeb"></div><div class="b" style="left:1393px;top:686px;width:1px;height:36px;background:#c8c8c8"></div><div class="b" style="left:1393px;top:723px;width:1px;height:79px;background:#ebebeb"></div><span class="t" style="left:277px;top:699.81px;font-size:11.8px;font-weight:bold;color:#333;">Action</span><span class="t" style="left:332px;top:699.81px;font-size:11.8px;font-weight:bold;color:#333;">Description</span><span class="t" style="left:617px;top:699.81px;font-size:11.8px;font-weight:bold;color:#333;">Vendor</span><span class="t" style="left:777px;top:699.81px;font-size:11.8px;font-weight:bold;color:#333;">Contract</span><span class="t" style="left:913px;top:699.81px;font-size:11.8px;font-weight:bold;color:#333;">Job*</span><span class="t" style="left:1049px;top:699.81px;font-size:11.8px;font-weight:bold;color:#333;">Cost Code*</span><span class="t" style="left:1263px;top:699.81px;font-size:11.8px;font-weight:bold;color:#333;">Cost Type*</span><span class="t" style="left:1399px;top:699.81px;font-size:11.8px;font-weight:bold;color:#333;">Billing Code</span><div class="b" style="left:271px;top:762px;width:1341px;height:1px;background:#ececec"></div><div class="b" style="left:271px;top:802px;width:1341px;height:1px;background:#ececec"></div><svg style="left:277px;top:732px;opacity:1.0" width="44" height="21" viewBox="0 0 44 21"><rect x="0" y="0" width="20.5" height="20.5" rx="3.5" fill="#4285f4"/><path d="M4 10.25H16.5M10.25 4V16.5" stroke="#fff" stroke-width="3"/><rect x="23.5" y="0" width="20.5" height="20.5" rx="3.5" fill="#4285f4"/><path d="M27.5 10.25H40" stroke="#fff" stroke-width="3"/></svg><div class="inp" style="left:332px;top:728px;width:239px;height:28px;background:#fff"></div><span class="t" style="left:338px;top:737.64px;font-size:12px;font-weight:normal;color:#333;letter-spacing:0.2px">Project Contingency</span><svg style="left:562px;top:747px" width="6" height="6" viewBox="0 0 6 6"><g fill="#999"><rect x="4" y="0" width="1" height="1"/><rect x="2" y="2" width="1" height="1"/><rect x="4" y="2" width="1" height="1"/><rect x="0" y="4" width="1" height="1"/><rect x="2" y="4" width="1" height="1"/><rect x="4" y="4" width="1" height="1"/></g></svg><div class="inp" style="left:617px;top:728px;width:148px;height:28px;background:#fff"></div><svg style="left:751px;top:736.5px" width="12" height="11" viewBox="0 0 12 11"><circle cx="4" cy="4.4" r="3.7" fill="none" stroke="#8a8a8a" stroke-width="1.5"/><path d="M6.8 7.2L10.2 10.6" stroke="#8a8a8a" stroke-width="2" stroke-linecap="round"/></svg><div class="inp" style="left:777px;top:728px;width:124px;height:28px;background:#fff"></div><svg style="left:887px;top:736.5px" width="12" height="11" viewBox="0 0 12 11"><circle cx="4" cy="4.4" r="3.7" fill="none" stroke="#8a8a8a" stroke-width="1.5"/><path d="M6.8 7.2L10.2 10.6" stroke="#8a8a8a" stroke-width="2" stroke-linecap="round"/></svg><div class="inp" style="left:913px;top:728px;width:124px;height:28px;background:#fff"></div><svg style="left:1023px;top:736.5px" width="12" height="11" viewBox="0 0 12 11"><circle cx="4" cy="4.4" r="3.7" fill="none" stroke="#8a8a8a" stroke-width="1.5"/><path d="M6.8 7.2L10.2 10.6" stroke="#8a8a8a" stroke-width="2" stroke-linecap="round"/></svg><span class="t" style="left:919px;top:737.64px;font-size:12px;font-weight:normal;color:#333;letter-spacing:0.2px">15300</span><div class="inp" style="left:1049px;top:728px;width:201px;height:28px;background:#fff"></div><svg style="left:1236px;top:736.5px" width="12" height="11" viewBox="0 0 12 11"><circle cx="4" cy="4.4" r="3.7" fill="none" stroke="#8a8a8a" stroke-width="1.5"/><path d="M6.8 7.2L10.2 10.6" stroke="#8a8a8a" stroke-width="2" stroke-linecap="round"/></svg><span class="t" style="left:1055px;top:737.64px;font-size:12px;font-weight:normal;color:#333;letter-spacing:0.2px">18100</span><div class="inp" style="left:1263px;top:728px;width:123px;height:28px;background:#fff"></div><svg style="left:1372px;top:736.5px" width="12" height="11" viewBox="0 0 12 11"><circle cx="4" cy="4.4" r="3.7" fill="none" stroke="#8a8a8a" stroke-width="1.5"/><path d="M6.8 7.2L10.2 10.6" stroke="#8a8a8a" stroke-width="2" stroke-linecap="round"/></svg><span class="t" style="left:1269px;top:737.64px;font-size:12px;font-weight:normal;color:#333;letter-spacing:0.2px">C</span><div class="b" style="left:1399px;top:728px;width:195px;height:28px;background:linear-gradient(#e9e9e9,#dedede);border:1px solid #d5d5d5;border-radius:4px 0 0 4px"></div><svg style="left:1585px;top:737px" width="12" height="11" viewBox="0 0 12 11"><circle cx="4" cy="4.4" r="3.7" fill="none" stroke="#999" stroke-width="1.5"/><path d="M6.8 7.2L10.2 10.6" stroke="#999" stroke-width="2" stroke-linecap="round"/></svg><svg style="left:277px;top:772px;opacity:1.0" width="44" height="21" viewBox="0 0 44 21"><rect x="0" y="0" width="20.5" height="20.5" rx="3.5" fill="#4285f4"/><path d="M4 10.25H16.5M10.25 4V16.5" stroke="#fff" stroke-width="3"/><rect x="23.5" y="0" width="20.5" height="20.5" rx="3.5" fill="#4285f4"/><path d="M27.5 10.25H40" stroke="#fff" stroke-width="3"/></svg><div class="inp" style="left:332px;top:768px;width:239px;height:28px;background:#fff"></div><span class="t" style="left:338px;top:777.64px;font-size:12px;font-weight:normal;color:#333;letter-spacing:0.2px">Flooring</span><svg style="left:562px;top:787px" width="6" height="6" viewBox="0 0 6 6"><g fill="#999"><rect x="4" y="0" width="1" height="1"/><rect x="2" y="2" width="1" height="1"/><rect x="4" y="2" width="1" height="1"/><rect x="0" y="4" width="1" height="1"/><rect x="2" y="4" width="1" height="1"/><rect x="4" y="4" width="1" height="1"/></g></svg><div class="inp" style="left:617px;top:768px;width:148px;height:28px;background:#fff"></div><svg style="left:751px;top:776.5px" width="12" height="11" viewBox="0 0 12 11"><circle cx="4" cy="4.4" r="3.7" fill="none" stroke="#8a8a8a" stroke-width="1.5"/><path d="M6.8 7.2L10.2 10.6" stroke="#8a8a8a" stroke-width="2" stroke-linecap="round"/></svg><span class="t" style="left:623px;top:777.64px;font-size:12px;font-weight:normal;color:#333;letter-spacing:0.2px">HOLMES</span><div class="inp" style="left:777px;top:768px;width:124px;height:28px;background:#fff"></div><div class="b" style="left:778px;top:768.5px;width:103px;height:27.0px;background:#ffff00;border-radius:3px 0 0 3px"></div><svg style="left:887px;top:776.5px" width="12" height="11" viewBox="0 0 12 11"><circle cx="4" cy="4.4" r="3.7" fill="none" stroke="#8a8a8a" stroke-width="1.5"/><path d="M6.8 7.2L10.2 10.6" stroke="#8a8a8a" stroke-width="2" stroke-linecap="round"/></svg><span class="t" style="left:783px;top:777.64px;font-size:12px;font-weight:normal;color:#333;letter-spacing:0.2px">15300.035</span><div class="inp" style="left:913px;top:768px;width:124px;height:28px;background:#fff"></div><svg style="left:1023px;top:776.5px" width="12" height="11" viewBox="0 0 12 11"><circle cx="4" cy="4.4" r="3.7" fill="none" stroke="#8a8a8a" stroke-width="1.5"/><path d="M6.8 7.2L10.2 10.6" stroke="#8a8a8a" stroke-width="2" stroke-linecap="round"/></svg><span class="t" style="left:919px;top:777.64px;font-size:12px;font-weight:normal;color:#333;letter-spacing:0.2px">15300</span><div class="inp" style="left:1049px;top:768px;width:201px;height:28px;background:#fff"></div><svg style="left:1236px;top:776.5px" width="12" height="11" viewBox="0 0 12 11"><circle cx="4" cy="4.4" r="3.7" fill="none" stroke="#8a8a8a" stroke-width="1.5"/><path d="M6.8 7.2L10.2 10.6" stroke="#8a8a8a" stroke-width="2" stroke-linecap="round"/></svg><span class="t" style="left:1055px;top:777.64px;font-size:12px;font-weight:normal;color:#333;letter-spacing:0.2px">04840</span><div class="inp" style="left:1263px;top:768px;width:123px;height:28px;background:#fff"></div><svg style="left:1372px;top:776.5px" width="12" height="11" viewBox="0 0 12 11"><circle cx="4" cy="4.4" r="3.7" fill="none" stroke="#8a8a8a" stroke-width="1.5"/><path d="M6.8 7.2L10.2 10.6" stroke="#8a8a8a" stroke-width="2" stroke-linecap="round"/></svg><span class="t" style="left:1269px;top:777.64px;font-size:12px;font-weight:normal;color:#333;letter-spacing:0.2px">S2</span><div class="b" style="left:1399px;top:768px;width:195px;height:28px;background:linear-gradient(#e9e9e9,#dedede);border:1px solid #d5d5d5;border-radius:4px 0 0 4px"></div><svg style="left:1585px;top:777px" width="12" height="11" viewBox="0 0 12 11"><circle cx="4" cy="4.4" r="3.7" fill="none" stroke="#999" stroke-width="1.5"/><path d="M6.8 7.2L10.2 10.6" stroke="#999" stroke-width="2" stroke-linecap="round"/></svg><div class="b" style="left:1594px;top:686px;width:18px;height:159px;background:#f0f0f0;border-left:1px solid #ddd"></div><svg style="left:289px;top:813px" width="21" height="21" viewBox="0 0 21 21"><rect x="0" y="0" width="20.5" height="20.5" rx="3.5" fill="#4285f4"/><path d="M4 10.25H16.5M10.25 4V16.5" stroke="#fff" stroke-width="3"/></svg><div class="b" style="left:1468px;top:0px;width:144px;height:845px;background:linear-gradient(90deg,rgba(255,255,255,0),#fff 100%)"></div><div class="b" style="left:0px;top:768px;width:1612px;height:77px;background:linear-gradient(rgba(255,255,255,0),rgba(255,255,255,0.97) 94%,#fff)"></div></body></html>
